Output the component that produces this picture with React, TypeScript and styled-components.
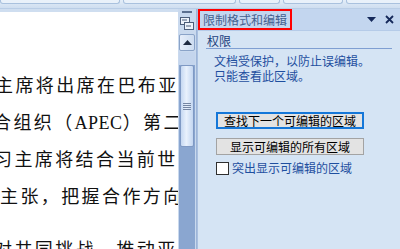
import React from "react";
import styled, { createGlobalStyle } from "styled-components";

const Global = createGlobalStyle`
  html, body { margin: 0; padding: 0; overflow: hidden; }
  body { width: 400px; height: 249px; background: #dbe6f4; }
  #root { width: 400px; height: 249px; }
`;

const Root = styled.div`
  width: 400px;
  height: 249px;
  display: flex;
  flex-direction: column;
  overflow: hidden;
  background: #d5e3f3;
  font-family: "Noto Sans CJK SC", sans-serif;
`;

const Ribbon = styled.div`
  height: 8px;
  flex: none;
  display: flex;
  gap: 3px;
  align-items: flex-start;
  background: linear-gradient(#e3edf8, #cfdef0);
  border-bottom: 1px solid #b9cde6;
`;

const RibbonGroup = styled.div<{ $w: number }>`
  width: ${(p) => p.$w}px;
  height: 3px;
  flex: none;
  border: 1px solid #a9c1de;
  border-top: none;
  border-radius: 0 0 3px 3px;
  background: #e9f1fa;
`;

const Main = styled.div`
  flex: 1;
  display: flex;
  min-height: 0;
  background: #cfdef0;
`;

const Doc = styled.div`
  width: 178px;
  flex: none;
  margin-top: 3px;
  background: #ffffff;
  overflow: hidden;
  padding-top: 65px;
  display: flex;
  flex-direction: column;
  gap: 19px;
`;

const DocLine = styled.div<{ $indent: number; $gap?: number }>`
  white-space: nowrap;
  font-family: "Liberation Serif", "Noto Sans CJK SC", serif;
  font-size: 18px;
  line-height: 18px;
  height: 18px;
  letter-spacing: 2.4px;
  color: #111;
  margin-left: ${(p) => p.$indent}px;
  margin-top: ${(p) => p.$gap ?? 0}px;
`;

const Latin = styled.span`
  font-family: "Liberation Serif", serif;
  letter-spacing: 0.5px;
`;

const ScrollCol = styled.div`
  width: 18px;
  flex: none;
  display: flex;
  flex-direction: column;
  align-items: center;
  background: #c9d9ee;
  border-right: 1px solid #9db5d8;
`;

const Split = styled.div`
  width: 10px;
  height: 2px;
  margin-top: 2px;
  background: #5b6f8f;
  flex: none;
`;

const IconBox = styled.div`
  height: 13px;
  margin-top: 4px;
  display: flex;
  align-items: center;
  justify-content: center;
  flex: none;
`;

const ArrowBtn = styled.div`
  width: 14px;
  height: 15px;
  margin-top: 4px;
  flex: none;
  border: 1px solid #8aa3c8;
  border-radius: 2px;
  background: linear-gradient(90deg, #e6eefa, #cddcf0);
  display: flex;
  align-items: center;
  justify-content: center;
`;

const Track = styled.div`
  flex: 1;
  width: 16px;
  margin-top: 1px;
  display: flex;
  flex-direction: column;
  background: #8aa6d0;
`;

const TrackTop = styled.div`
  height: 13px;
  flex: none;
  background: #c4d5ed;
`;

const Thumb = styled.div`
  height: 80px;
  flex: none;
  margin: 0 1px;
  border: 1px solid #7f99c4;
  border-radius: 2px;
  background: linear-gradient(90deg, #c6d8f2, #e9f1fc 45%, #c3d6f1);
  display: flex;
  flex-direction: column;
  align-items: center;
  justify-content: center;
  gap: 1px;
`;

const Grip = styled.div`
  width: 8px;
  height: 1px;
  background: #7586a3;
`;

const Panel = styled.div`
  flex: 1;
  display: flex;
  flex-direction: column;
  background: #d5e4f4;
  border-left: 1px solid #aac0e0;
`;

const Header = styled.div`
  height: 21px;
  flex: none;
  display: flex;
  align-items: center;
  background: #c3d6ef;
  border-bottom: 1px solid #b5cbe8;
`;

const Title = styled.div`
  height: 17px;
  padding: 0 3px;
  border: 2px solid #ff0000;
  font-size: 12px;
  line-height: 17px;
  color: #44618f;
  white-space: nowrap;
`;

const HeaderTools = styled.div`
  margin-left: auto;
  margin-right: 6px;
  display: flex;
  align-items: center;
  gap: 9px;
`;

const Body = styled.div`
  padding: 3px 8px 0 8px;
  display: flex;
  flex-direction: column;
`;

const Section = styled.div`
  font-size: 12px;
  line-height: 13px;
  color: #1c3f7d;
  padding-bottom: 1px;
  border-bottom: 1px solid #7f9fd2;
  padding-left: 1px;
`;

const Info = styled.div`
  margin-top: 4px;
  padding-left: 8px;
  display: flex;
  flex-direction: column;
`;

const InfoLine = styled.div`
  font-size: 12px;
  line-height: 15px;
  height: 15px;
  color: #1f4f9f;
  white-space: nowrap;
`;

const Actions = styled.div`
  margin-top: 29px;
  padding-left: 10px;
  display: flex;
  flex-direction: column;
  align-items: flex-start;
`;

const Button = styled.div<{ $focus?: boolean; $gap?: number }>`
  width: ${(p) => (p.$focus ? 144 : 146)}px;
  height: ${(p) => (p.$focus ? 13 : 15)}px;
  margin-top: ${(p) => p.$gap ?? 0}px;
  border: ${(p) => (p.$focus ? "2px solid #1577d8" : "1px solid #a3a3a3")};
  background: #e3e3e3;
  font-size: 12px;
  line-height: ${(p) => (p.$focus ? 13 : 15)}px;
  color: #000;
  text-align: center;
  white-space: nowrap;
`;

const CheckRow = styled.label`
  margin-top: 6px;
  display: flex;
  align-items: center;
  gap: 3px;
  font-size: 12px;
  line-height: 14px;
  color: #1f4f9f;
  white-space: nowrap;
`;

const Box = styled.span`
  width: 11px;
  height: 11px;
  border: 1px solid #2f2f2f;
  background: #ffffff;
  display: inline-block;
`;

export default function App() {
  return (
    <>
      <Global />
      <Root>
        <Ribbon>
          <RibbonGroup $w={118} />
          <RibbonGroup $w={111} />
          <RibbonGroup $w={39} />
          <RibbonGroup $w={58} />
          <RibbonGroup $w={62} />
        </Ribbon>
        <Main>
          <Doc>
            <DocLine $indent={-5}>主席将出席在巴布亚</DocLine>
            <DocLine $indent={-7}>
              合组织（<Latin>APEC</Latin>）第二
            </DocLine>
            <DocLine $indent={-6}>习主席将结合当前世</DocLine>
            <DocLine $indent={0}>主张，把握合作方向</DocLine>
            <DocLine $indent={-6} $gap={16}>
              对共同挑战，推动亚
            </DocLine>
          </Doc>
          <ScrollCol>
            <Split />
            <IconBox>
              <svg width="14" height="13" viewBox="0 0 14 13">
                <rect x="0.5" y="0.5" width="9" height="7" fill="#eef3fa" stroke="#4d5e7a" />
                <rect x="4.5" y="5.5" width="9" height="7" fill="#eef3fa" stroke="#4d5e7a" />
                <path d="M2 3h5M6 9h5" stroke="#4d5e7a" strokeWidth="1" />
              </svg>
            </IconBox>
            <ArrowBtn>
              <svg width="9" height="5" viewBox="0 0 9 5">
                <path d="M4.5 0L9 5H0z" fill="#1e2a40" />
              </svg>
            </ArrowBtn>
            <Track>
              <TrackTop />
              <Thumb>
                <Grip />
                <Grip />
                <Grip />
                <Grip />
              </Thumb>
            </Track>
          </ScrollCol>
          <Panel>
            <Header>
              <Title>限制格式和编辑</Title>
              <HeaderTools>
                <svg width="9" height="5" viewBox="0 0 9 5">
                  <path d="M0 0H9L4.5 5z" fill="#15295a" />
                </svg>
                <svg width="9" height="9" viewBox="0 0 9 9">
                  <path d="M1 1L8 8M8 1L1 8" stroke="#15295a" strokeWidth="1.8" />
                </svg>
              </HeaderTools>
            </Header>
            <Body>
              <Section>权限</Section>
              <Info>
                <InfoLine>文档受保护，以防止误编辑。</InfoLine>
                <InfoLine>只能查看此区域。</InfoLine>
              </Info>
              <Actions>
                <Button $focus>查找下一个可编辑的区域</Button>
                <Button $gap={9}>显示可编辑的所有区域</Button>
                <CheckRow>
                  <Box />
                  突出显示可编辑的区域
                </CheckRow>
              </Actions>
            </Body>
          </Panel>
        </Main>
      </Root>
    </>
  );
}
